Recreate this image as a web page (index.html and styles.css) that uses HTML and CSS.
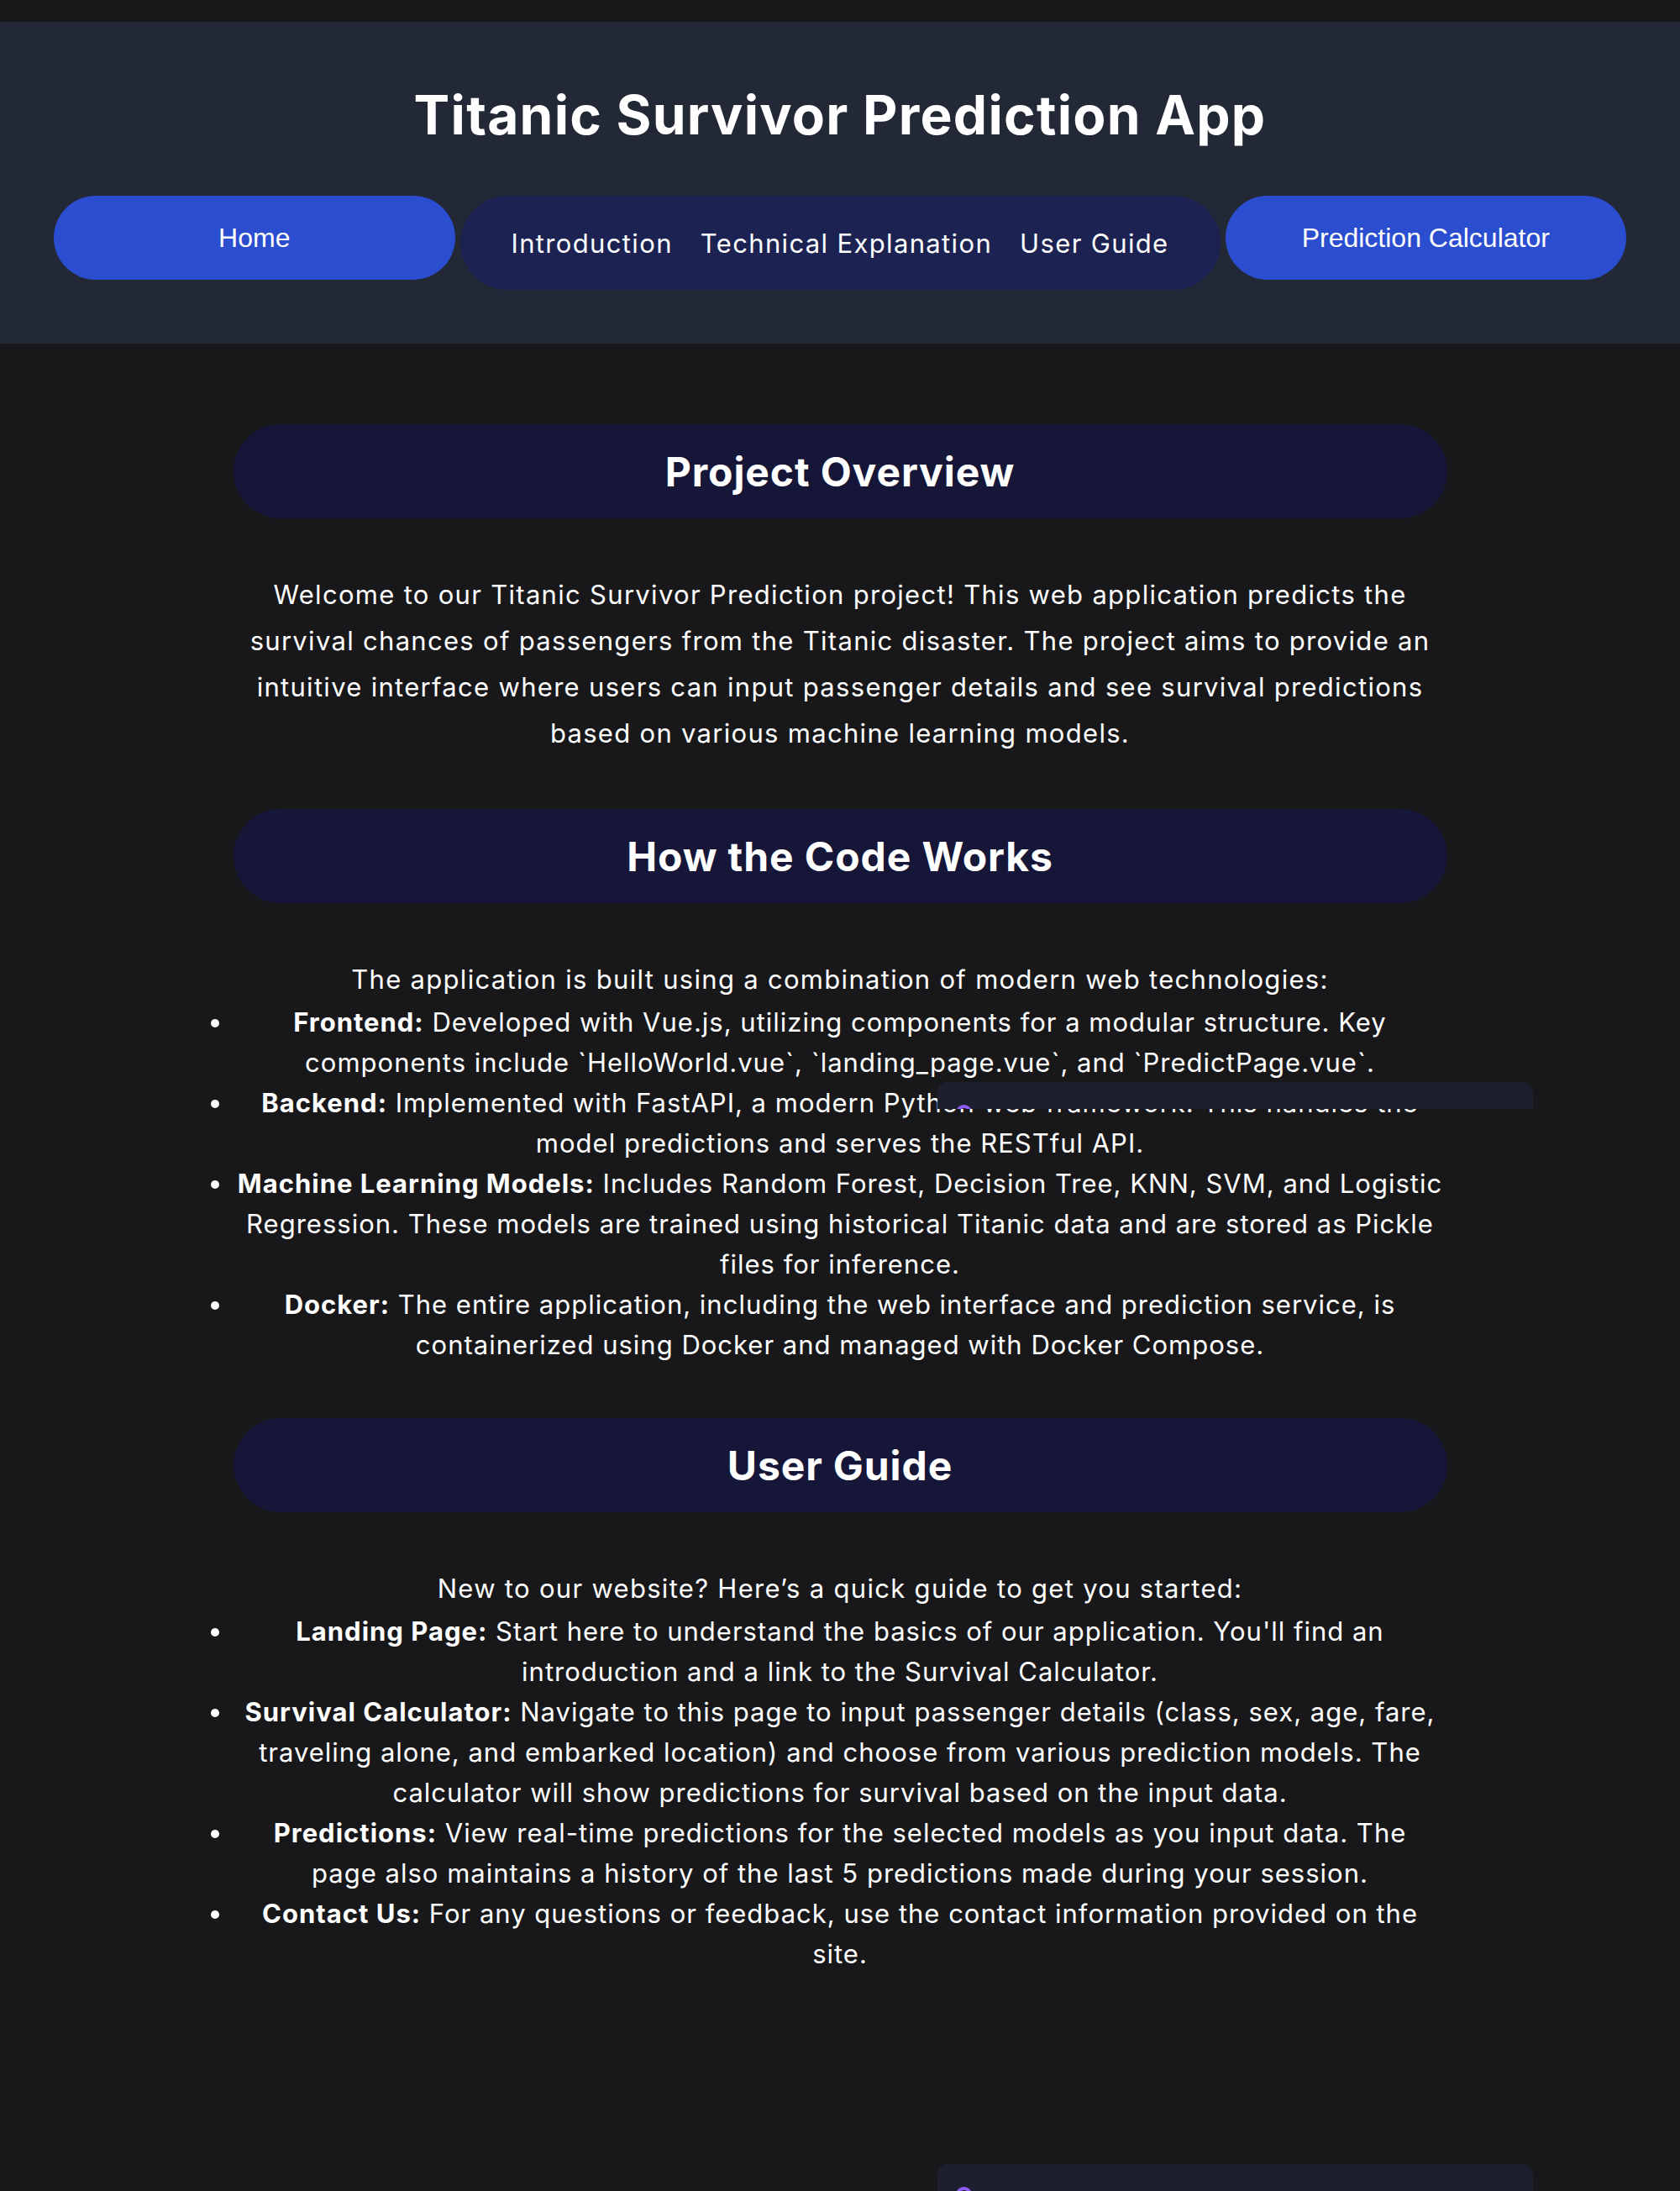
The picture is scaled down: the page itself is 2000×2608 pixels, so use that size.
FILE: index.html
```html
<!DOCTYPE html>
<html lang="en">
<head>
<meta charset="utf-8">
<title>Titanic Survivor Prediction App</title>
<link rel="stylesheet" href="styles.css">
</head>
<body>
<header class="app-header">
  <h1 class="app-title">Titanic Survivor Prediction App</h1>
  <nav class="main-nav">
    <button class="nav-btn">Home</button>
    <div class="nav-links">
      <a class="nav-link" href="#intro">Introduction</a>
      <a class="nav-link" href="#tech">Technical Explanation</a>
      <a class="nav-link" href="#guide">User Guide</a>
    </div>
    <button class="nav-btn">Prediction Calculator</button>
  </nav>
</header>

<main class="content">
  <section class="block" id="intro">
    <h2 class="block-title">Project Overview</h2>
    <p class="block-text">Welcome to our Titanic Survivor Prediction project! This web application predicts the survival chances of passengers from the Titanic disaster. The project aims to provide an intuitive interface where users can input passenger details and see survival predictions based on various machine learning models.</p>
  </section>

  <section class="block" id="tech">
    <h2 class="block-title">How the Code Works</h2>
    <p class="block-text">The application is built using a combination of modern web technologies:</p>
    <ul class="feature-list">
      <li><strong>Frontend:</strong> Developed with Vue.js, utilizing components for a modular structure. Key components include `HelloWorld.vue`, `landing_page.vue`, and `PredictPage.vue`.</li>
      <li><strong>Backend:</strong> Implemented with FastAPI, a modern Python web framework. This handles the model predictions and serves the RESTful API.</li>
      <li><strong>Machine Learning Models:</strong> Includes Random Forest, Decision Tree, KNN, SVM, and Logistic<br>Regression. These models are trained using historical Titanic data and are stored as Pickle<br>files for inference.</li>
      <li><strong>Docker:</strong> The entire application, including the web interface and prediction service, is containerized using Docker and managed with Docker Compose.</li>
    </ul>
  </section>

  <section class="block" id="guide">
    <h2 class="block-title">User Guide</h2>
    <p class="block-text">New to our website? Here’s a quick guide to get you started:</p>
    <ul class="feature-list">
      <li><strong>Landing Page:</strong> Start here to understand the basics of our application. You'll find an introduction and a link to the Survival Calculator.</li>
      <li><strong>Survival Calculator:</strong> Navigate to this page to input passenger details (class, sex, age, fare,<br>traveling alone, and embarked location) and choose from various prediction models. The<br>calculator will show predictions for survival based on the input data.</li>
      <li><strong>Predictions:</strong> View real-time predictions for the selected models as you input data. The<br>page also maintains a history of the last 5 predictions made during your session.</li>
      <li><strong>Contact Us:</strong> For any questions or feedback, use the contact information provided on the<br>site.</li>
    </ul>
  </section>
</main>

<div class="floating-bar floating-bar--mid">
  <span class="floating-bar__icon"></span>
  <span class="floating-bar__text">Convert Chrome Screenshot While Testing Panel</span>
</div>
<div class="floating-bar floating-bar--bottom">
  <span class="floating-bar__icon"></span>
  <span class="floating-bar__text">Convert Chrome Screenshot While Testing Panel</span>
</div>
</body>
</html>
```
FILE: styles.css
```css
html, body {
  margin: 0;
}

body {
  position: relative;
  padding-top: 26px;
  background: #18181b;
  color: #ffffff;
  font-family: Inter, "Open Sans", sans-serif;
}

.app-header {
  background: #222836;
  padding: 72px 64px 64px;
}

.app-title {
  margin: 0 0 58px;
  text-align: center;
  font-size: 64px;
  line-height: 77px;
  font-weight: 700;
  letter-spacing: 1.25px;
}

.main-nav {
  display: flex;
  align-items: flex-start;
  gap: 6px;
}

.nav-btn {
  flex: 1;
  height: 100px;
  border: none;
  border-radius: 50px;
  background: #2b4ed0;
  color: #ffffff;
  font-family: "Liberation Sans", Arial, sans-serif;
  font-size: 32px;
}

.nav-links {
  display: flex;
  align-items: center;
  gap: 33px;
  height: 112px;
  padding: 0 61px;
  border-radius: 56px;
  background: #1c2352;
}

.nav-link {
  color: #ffffff;
  text-decoration: none;
  font-size: 31px;
  letter-spacing: 1.35px;
}

.content {
  width: 1445px;
  margin: 96px auto 0;
}

.block + .block {
  margin-top: 63px;
}

.block-title {
  display: flex;
  align-items: center;
  justify-content: center;
  height: 112px;
  margin: 0 0 63px;
  border-radius: 56px;
  background: #151638;
  font-size: 48px;
  font-weight: 700;
  letter-spacing: 0.9px;
}

.block-text {
  margin: 0;
  font-size: 31px;
  line-height: 55px;
  text-align: center;
  letter-spacing: 1.3px;
}

.feature-list {
  margin: 0 0 3px;
  padding: 0;
  list-style: disc outside;
  font-size: 31px;
  line-height: 48px;
  text-align: center;
  letter-spacing: 1px;
}

.feature-list strong {
  font-weight: 700;
}

.floating-bar {
  position: absolute;
  left: 1116px;
  width: 709px;
  height: 32px;
  overflow: hidden;
  border-radius: 12px 12px 0 0;
  background: #1e1f2e;
}

.floating-bar--mid {
  top: 1288px;
}

.floating-bar--bottom {
  position: fixed;
  top: auto;
  bottom: 0;
}

.floating-bar__icon {
  position: absolute;
  left: 22px;
  top: 27px;
  width: 19px;
  height: 19px;
  box-sizing: border-box;
  border: 4px solid #8b5cf6;
  border-radius: 50%;
}

.floating-bar__text {
  position: absolute;
  left: 67px;
  top: 24px;
  white-space: nowrap;
  font-family: "Noto Sans", sans-serif;
  font-size: 28px;
  color: #8e8fa0;
}
```
